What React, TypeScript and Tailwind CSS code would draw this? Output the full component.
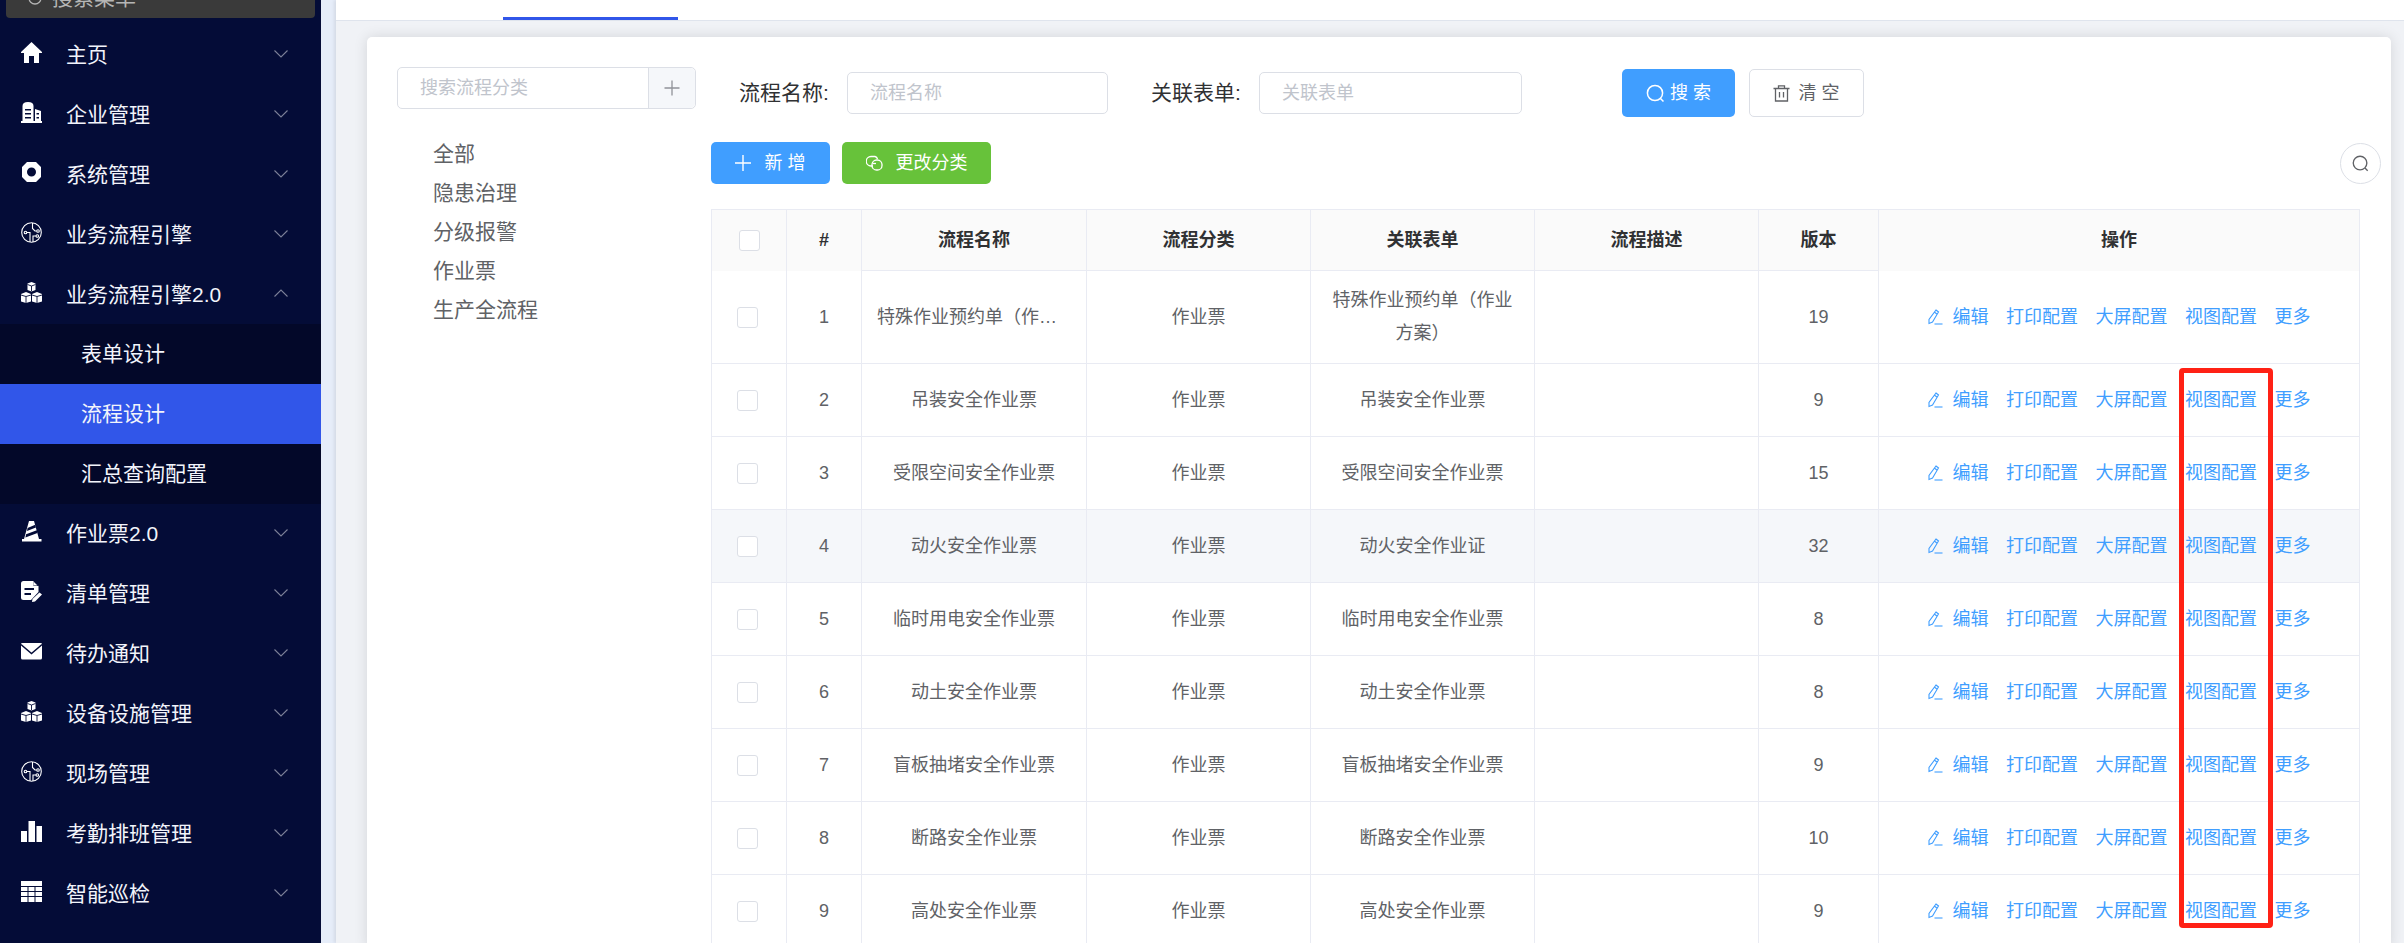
import React from "react";

const D = "#040c37";

function Ico({ children }: { children: React.ReactNode }) {
  return (
    <svg width="21" height="21" viewBox="0 0 21 21" className="shrink-0">
      {children}
    </svg>
  );
}

const Home = () => (
  <Ico>
    <path fill="#fff" d="M10.5 0 L21 10 V11 H18 V21 H13 V14 H8 V21 H3 V11 H0 V10 Z" />
  </Ico>
);
const Building = () => (
  <Ico>
    <path fill="#fff" d="M0 19 H21 V21 H0 Z M1.5 19 V4 Q1.5 0 7 0 Q12.5 0 12.5 4 V19 Z M14 19 V7 L20 9 V19 Z" />
    <path fill={D} d="M4 7 H10 V8.5 H4 Z M4 11 H10 V12.5 H4 Z M4 15 H10 V16.5 H4 Z M15.5 11 H18 V12.5 H15.5 Z M15.5 15 H18 V16.5 H15.5 Z" />
  </Ico>
);
const Nut = () => (
  <Ico>
    <path fillRule="evenodd" fill="#fff" d="M6 0 H15 L20 5 V15 L15 20 H6 L1 15 V5 Z M10.5 5.5 A4.5 4.5 0 1 0 10.5 14.5 A4.5 4.5 0 1 0 10.5 5.5 Z" />
  </Ico>
);
const Circuit = () => (
  <Ico>
    <g fill="none" stroke="#fff" strokeWidth="1.1">
      <circle cx="10.5" cy="10.5" r="9.8" />
      <path d="M11.5 1 V6.5 L14 9 H15.5" />
      <circle cx="17" cy="9" r="1.3" />
      <circle cx="4.5" cy="10.5" r="1.3" />
      <path d="M5.8 10.5 H9 V20" />
      <path d="M12 20 V14 H15" />
      <circle cx="16.3" cy="14" r="1.3" />
    </g>
  </Ico>
);
const Boxes = () => (
  <Ico>
    <path fill="#fff" d="M6.5 1.5 L10.5 0 L14.5 1.5 V8 L10.5 9.5 L6.5 8 Z M0 12 L5 10 L10 12 V19.5 L5 21 L0 19.5 Z M11 12 L16 10 L21 12 V19.5 L16 21 L11 19.5 Z" />
    <path fill="none" stroke={D} strokeWidth="0.9" d="M6.5 2.5 L10.5 4 L14.5 2.5 M10.5 4 V9 M0 13 L5 14.5 L10 13 M5 14.5 V21 M11 13 L16 14.5 L21 13 M16 14.5 V21" />
  </Ico>
);
const Cone = () => (
  <Ico>
    <path fill="#fff" d="M8 0 H13 L18 18 H20.5 V20.5 H1 V18 H3 Z" />
    <path fill={D} d="M6.6 7 L14.2 3.8 L14.9 6.4 L6 10 Z M5.1 13.2 L15.8 9.2 L16.5 12 L4.4 16.4 Z" />
  </Ico>
);
const Note = () => (
  <Ico>
    <path fill="#fff" d="M2.5 0 H13 L17.5 5 V11 L10 19 H2.5 Q0 19 0 16.5 V2.5 Q0 0 2.5 0 Z" />
    <path fill={D} d="M3.5 7 H13 V9 H3.5 Z M3.5 12 H10 V14 H3.5 Z M12.5 0 H14 L18 5 H12.5 Z" />
    <path fill="#fff" d="M12.5 0.5 L16.5 4.5 H12.5 Z M18.5 11.5 L21 13.5 L14 20.5 L11 21 L11.5 18 Z" />
  </Ico>
);
const Mail = () => (
  <Ico>
    <path fill="#fff" d="M1.5 2 H19.5 Q21 2 21 3 V17 Q21 18.5 19.5 18.5 H1.5 Q0 18.5 0 17 V3 Q0 2 1.5 2 Z" />
    <path fill="none" stroke={D} strokeWidth="1.4" d="M0 3.5 L10.5 12.5 L21 3.5" />
  </Ico>
);
const Bars = () => (
  <Ico>
    <path fill="#fff" d="M0 10 H6 V21 H0 Z M7.5 0 H14 V21 H7.5 Z M15.5 5 H21 V21 H15.5 Z" />
  </Ico>
);
const TableIco = () => (
  <Ico>
    <path fill="#fff" d="M0 0 H21 V5 H0 Z M0 6 H6.5 V10 H0 Z M7.5 6 H13.5 V10 H7.5 Z M14.5 6 H21 V10 H14.5 Z M0 11 H6.5 V15 H0 Z M7.5 11 H13.5 V15 H7.5 Z M14.5 11 H21 V15 H14.5 Z M0 16 H6.5 V21 H0 Z M7.5 16 H13.5 V21 H7.5 Z M14.5 16 H21 V21 H14.5 Z" />
  </Ico>
);

const Chev = ({ up }: { up?: boolean }) => (
  <svg width="14" height="8" viewBox="0 0 14 8" className={up ? "ml-auto mr-[33px] mb-[5px]" : "ml-auto mr-[33px] mb-[3px]"}>
    <path fill="none" stroke="#7c8198" strokeWidth="1.1" d={up ? "M0.5 7.5 L7 1 L13.5 7.5" : "M0.5 0.5 L7 7 L13.5 0.5"} />
  </svg>
);

function MenuItem({ icon, label, up }: { icon: React.ReactNode; label: string; up?: boolean }) {
  return (
    <div className="flex h-[60px] items-center pl-[21px] text-[21px] text-[#f2f4fb]">
      <span className="mb-[6px] flex w-[45px]">{icon}</span>
      <span>{label}</span>
      <Chev up={up} />
    </div>
  );
}

function SubItem({ label, active }: { label: string; active?: boolean }) {
  return (
    <div className={active ? "flex h-[60px] items-center bg-[#3156e9] pl-[81px] text-[21px] text-[#f2f4fb]" : "flex h-[60px] items-center pl-[81px] text-[21px] text-[#f2f4fb]"}>
      {label}
    </div>
  );
}

function Sidebar() {
  return (
    <aside className="flex h-full w-[321px] shrink-0 flex-col overflow-hidden bg-[#040c37]">
      <div className="mx-[6px] -mt-[22px] flex h-[40px] shrink-0 items-center rounded-[4px] bg-[#3a3a3a] pl-[22px] text-[21px] text-[#b5b5b5]">
        <svg width="15" height="15" viewBox="0 0 15 15" className="mr-[9px]">
          <circle cx="7" cy="7" r="6" fill="none" stroke="#b5b5b5" strokeWidth="1.3" />
        </svg>
        搜索菜单
      </div>
      <div className="mt-[7px] shrink-0">
        <MenuItem icon={<Home />} label="主页" />
        <MenuItem icon={<Building />} label="企业管理" />
        <MenuItem icon={<Nut />} label="系统管理" />
        <MenuItem icon={<Circuit />} label="业务流程引擎" />
        <MenuItem icon={<Boxes />} label="业务流程引擎2.0" up />
        <div className="-mt-px bg-[#030829]">
          <SubItem label="表单设计" />
          <SubItem label="流程设计" active />
          <SubItem label="汇总查询配置" />
        </div>
        <MenuItem icon={<Cone />} label="作业票2.0" />
        <MenuItem icon={<Note />} label="清单管理" />
        <MenuItem icon={<Mail />} label="待办通知" />
        <MenuItem icon={<Boxes />} label="设备设施管理" />
        <MenuItem icon={<Circuit />} label="现场管理" />
        <MenuItem icon={<Bars />} label="考勤排班管理" />
        <MenuItem icon={<TableIco />} label="智能巡检" />
      </div>
    </aside>
  );
}

const SearchIco = ({ c, s = 19 }: { c: string; s?: number }) => (
  <svg width={s} height={s} viewBox="0 0 19 19" className="shrink-0">
    <circle cx="9" cy="9" r="7.6" fill="none" stroke={c} strokeWidth="1.5" />
    <path d="M14.5 14.5 L17.5 17.5" stroke={c} strokeWidth="1.5" fill="none" />
  </svg>
);

const PencilIco = () => (
  <svg width="15" height="16" viewBox="0 0 15 16" className="shrink-0">
    <path fill="none" stroke="#409eff" strokeWidth="1.1" d="M8 1 L10.5 3 L4.5 13 L1 14.5 L1 10.5 Z M6.6 3.2 L9.2 5.2" />
    <path fill="none" stroke="#409eff" strokeWidth="1.1" d="M6.5 15 H14.5" />
  </svg>
);

function Btn({ cls, children }: { cls: string; children: React.ReactNode }) {
  return <div className={"flex items-center justify-center text-[18px] " + cls}>{children}</div>;
}

function Filter() {
  return (
    <div className="flex h-[48px] items-center">
      <span className="ml-[28px] w-[90px] whitespace-nowrap text-[21px] text-[#303133]">流程名称:</span>
      <div className="ml-[18px] flex h-[42px] w-[261px] items-center rounded-[5px] border border-[#dcdfe6] bg-white pl-[22px] text-[18px] text-[#c0c4cc]">流程名称</div>
      <span className="ml-[43px] w-[90px] whitespace-nowrap text-[21px] text-[#303133]">关联表单:</span>
      <div className="ml-[18px] flex h-[42px] w-[263px] items-center rounded-[5px] border border-[#dcdfe6] bg-white pl-[22px] text-[18px] text-[#c0c4cc]">关联表单</div>
      <Btn cls="ml-[100px] h-[48px] w-[113px] gap-[5px] rounded-[5px] bg-[#409eff] text-white">
        <SearchIco c="#fff" />
        <span>搜 索</span>
      </Btn>
      <Btn cls="ml-[14px] h-[48px] w-[115px] gap-[8px] rounded-[5px] border border-[#dcdfe6] bg-white text-[#606266]">
        <svg width="17" height="17" viewBox="0 0 17 17" className="shrink-0">
          <path fill="none" stroke="#606266" strokeWidth="1.3" d="M0.5 3.5 H16.5 M5.5 3.5 V0.8 H11.5 V3.5 M2.5 3.5 V16 H14.5 V3.5 M6.5 7 V12.5 M10.5 7 V12.5" />
        </svg>
        <span>清 空</span>
      </Btn>
    </div>
  );
}

function Toolbar() {
  return (
    <div className="mt-[25px] flex h-[42px] items-center">
      <Btn cls="h-[42px] w-[119px] gap-[13px] rounded-[5px] bg-[#409eff] text-white">
        <svg width="16" height="16" viewBox="0 0 16 16" className="shrink-0">
          <path d="M8 0 V16 M0 8 H16" stroke="#fff" strokeWidth="1.4" fill="none" />
        </svg>
        <span>新 增</span>
      </Btn>
      <Btn cls="ml-[12px] h-[42px] w-[149px] gap-[13px] rounded-[5px] bg-[#67c23a] text-white">
        <svg width="17" height="16" viewBox="0 0 17 16" className="shrink-0">
          <g fill="none" stroke="#fff" strokeWidth="1.3">
            <path d="M7 11 H5 A4.3 4.3 0 0 1 5 1.5 H9 A3.6 3.6 0 0 1 11.5 4" />
            <rect x="6" y="5" width="10" height="10" rx="4.6" />
            <path d="M6.5 8.5 H10" />
          </g>
        </svg>
        <span>更改分类</span>
      </Btn>
      <div className="ml-auto mr-[10px] flex h-[41px] w-[41px] items-center justify-center rounded-full border border-[#dcdfe6]">
        <SearchIco c="#606266" s={17} />
      </div>
    </div>
  );
}

const rows = [
  { n: "特殊作业预约单（作业方案）", f: "特殊作业预约单（作业方案）", v: "19" },
  { n: "吊装安全作业票", f: "吊装安全作业票", v: "9" },
  { n: "受限空间安全作业票", f: "受限空间安全作业票", v: "15" },
  { n: "动火安全作业票", f: "动火安全作业证", v: "32" },
  { n: "临时用电安全作业票", f: "临时用电安全作业票", v: "8" },
  { n: "动土安全作业票", f: "动土安全作业票", v: "8" },
  { n: "盲板抽堵安全作业票", f: "盲板抽堵安全作业票", v: "9" },
  { n: "断路安全作业票", f: "断路安全作业票", v: "10" },
  { n: "高处安全作业票", f: "高处安全作业票", v: "9" },
];

const Check = ({ cls }: { cls: string }) => (
  <div className={"h-[21px] w-[21px] rounded-[3px] border border-[#dcdfe6] bg-white " + cls} />
);

const thL = "border-r border-[#e9ebf3] bg-[#fafafa] p-0 text-center text-[18px] font-bold text-[#303133]";
const th = thL + " border-b";
const td = "border-r border-b border-[#e9ebf3] p-0 px-[15px] text-center text-[18px] leading-[33px] text-[#606266]";

function Table() {
  return (
    <table className="mt-[25px] w-[1648px] table-fixed border-separate border-spacing-0 border-t border-l border-[#e9ebf3]">
      <colgroup>
        <col className="w-[75px]" />
        <col className="w-[75px]" />
        <col className="w-[225px]" />
        <col className="w-[224px]" />
        <col className="w-[224px]" />
        <col className="w-[224px]" />
        <col className="w-[120px]" />
        <col className="w-[481px]" />
      </colgroup>
      <thead>
        <tr className="h-[61px]">
          <th className={thL}>
            <Check cls="ml-[27px]" />
          </th>
          <th className={thL}>#</th>
          <th className={th}>流程名称</th>
          <th className={th}>流程分类</th>
          <th className={th}>关联表单</th>
          <th className={th}>流程描述</th>
          <th className={th}>版本</th>
          <th className={thL}>操作</th>
        </tr>
      </thead>
      <tbody>
        {rows.map((r, i) => (
          <tr key={i} className={(i === 0 ? "h-[93px] " : "h-[73px] ") + (i === 3 ? "bg-[#f5f7fa]" : "")}>
            <td className={td}>
              <Check cls="ml-[10px]" />
            </td>
            <td className={td}>{i + 1}</td>
            <td className={td + " truncate"}>{r.n}</td>
            <td className={td}>作业票</td>
            <td className={td}>{r.f}</td>
            <td className={td}></td>
            <td className={td}>{r.v}</td>
            <td className={td}>
              <div className="flex items-center justify-center gap-[17.5px] text-[#409eff]">
                <span className="flex items-center gap-[10px]">
                  <PencilIco />
                  编辑
                </span>
                <span>打印配置</span>
                <span>大屏配置</span>
                <span>视图配置</span>
                <span>更多</span>
              </div>
            </td>
          </tr>
        ))}
      </tbody>
    </table>
  );
}

function CategoryPanel() {
  return (
    <div className="w-[299px] shrink-0 pt-[30px]">
      <div className="flex h-[42px] rounded-[5px] border border-[#dcdfe6] bg-white text-[18px] text-[#c0c4cc]">
        <div className="flex flex-1 items-center pl-[22px]">搜索流程分类</div>
        <div className="flex w-[47px] items-center justify-center rounded-r-[5px] border-l border-[#dcdfe6] bg-[#f5f7fa]">
          <svg width="16" height="16" viewBox="0 0 16 16">
            <path d="M8 0.5 V15.5 M0.5 8 H15.5" stroke="#909399" strokeWidth="1.3" fill="none" />
          </svg>
        </div>
      </div>
      <div className="mt-[25px] flex flex-col pl-[36px] text-[21px] leading-[39px] text-[#606266]">
        <div>全部</div>
        <div>隐患治理</div>
        <div>分级报警</div>
        <div>作业票</div>
        <div>生产全流程</div>
      </div>
    </div>
  );
}

export default function App() {
  return (
    <div className="relative flex h-[943px] w-[2404px] overflow-hidden [font-family:'Liberation_Sans','Noto_Sans_CJK_SC',sans-serif]">
      <Sidebar />
      <div className="flex min-w-0 flex-1 bg-[#e6edf9] pl-[15px]">
        <main className="flex min-w-0 flex-1 flex-col bg-[#f0f2f6] shadow-[-2px_0_3px_rgba(0,0,0,0.08)]">
          <div className="h-[21px] shrink-0 border-b border-[#dfe4ed] bg-white">
            <div className="ml-[167px] h-[20px] w-[175px] border-b-[3px] border-[#3156e9]" />
          </div>
          <div className="mt-[16px] mr-[13px] ml-[31px] flex flex-1 gap-[15px] rounded-t-[5px] bg-white pl-[30px] shadow-[0_0_14px_rgba(0,0,0,0.12)]">
            <CategoryPanel />
            <div className="min-w-0 flex-1 pt-[32px]">
              <Filter />
              <Toolbar />
              <Table />
            </div>
          </div>
        </main>
      </div>
      <div className="pointer-events-none absolute top-[368px] left-[2179px] h-[560px] w-[94px] rounded-[4px] border-[5px] border-[#ff2115]" />
    </div>
  );
}
